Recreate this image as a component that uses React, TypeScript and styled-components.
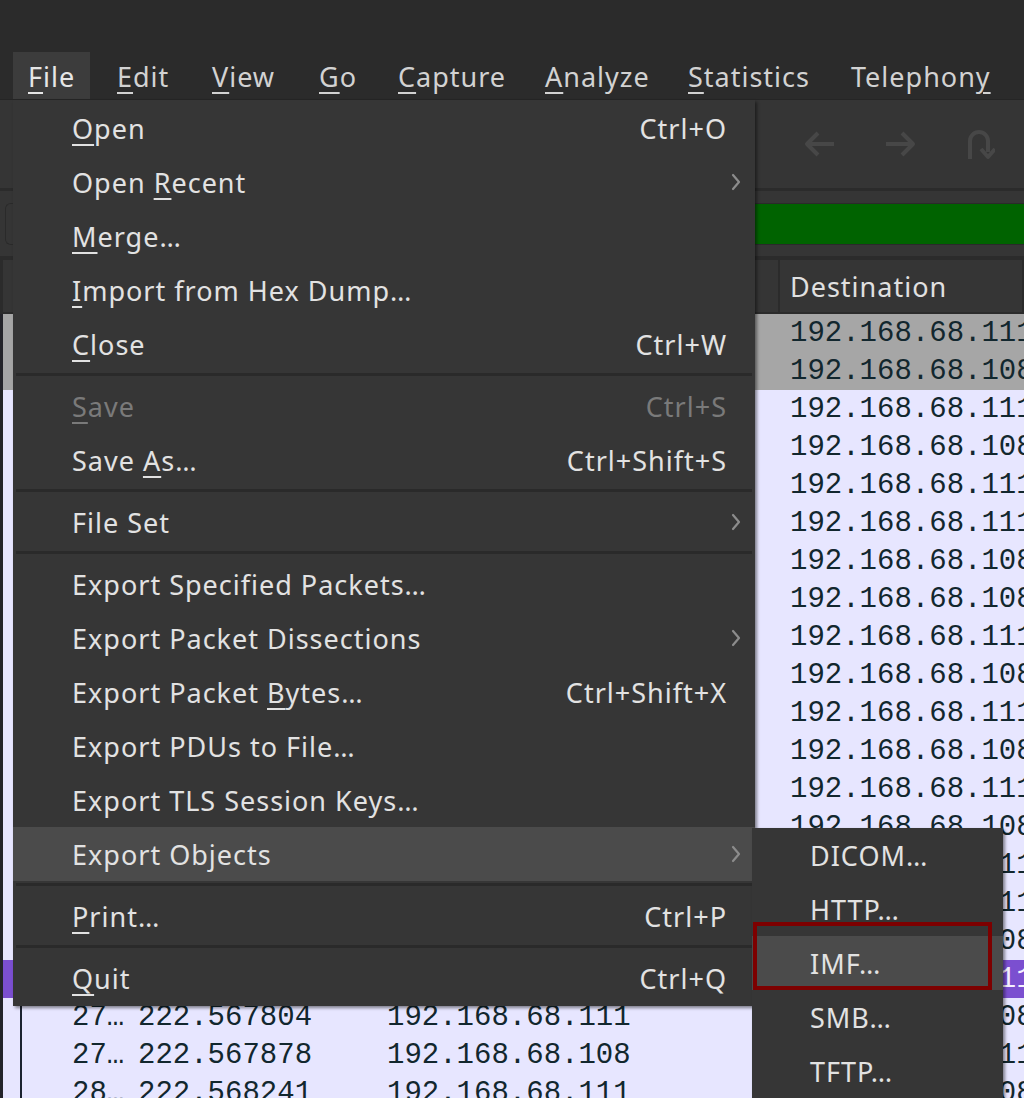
import React from "react";
import styled, { createGlobalStyle, css } from "styled-components";

const Global = createGlobalStyle`
  html, body { margin: 0; padding: 0; background: #2b2b2b; overflow: hidden; }
  * { box-sizing: border-box; }
`;

const UI = `"Noto Sans", "DejaVu Sans", sans-serif`;
const MONO = `"Liberation Mono", "DejaVu Sans Mono", monospace`;

const uiText = css`
  font-family: ${UI};
  font-size: 27px;
  letter-spacing: 1px;
`;

const Window = styled.div`
  position: relative;
  width: 1024px;
  height: 1098px;
  overflow: hidden;
  background: #2b2b2b;
  display: flex;
  flex-direction: column;
  font-family: ${UI};
`;

const TitleSpace = styled.div`
  height: 52px;
  flex: none;
`;

const MenuBar = styled.div`
  height: 48px;
  flex: none;
  display: flex;
  gap: 12px;
  padding-left: 13px;
  border-bottom: 1px solid #252525;
`;

const MenuTitle = styled.div<{ $w: number; $open?: boolean }>`
  width: ${(p) => p.$w}px;
  flex: none;
  display: flex;
  align-items: center;
  padding: 2px 0 0 15px;
  ${uiText}
  color: ${(p) => (p.$open ? "#e6e6e6" : "#d2d2d2")};
  background: ${(p) => (p.$open ? "#3c3c3c" : "transparent")};
  white-space: nowrap;
`;

const Mn = styled.span`
  text-decoration: underline;
  text-decoration-thickness: 2px;
  text-underline-offset: 5px;
`;

const Toolbar = styled.div`
  height: 91px;
  flex: none;
  background: #353535;
  display: flex;
  align-items: center;
  border-bottom: 3px solid #2b2b2b;
`;

const ToolButton = styled.div`
  width: 80px;
  height: 60px;
  flex: none;
  display: flex;
  align-items: center;
  justify-content: center;
  color: #474747;
`;

const ToolSep = styled.div`
  width: 20px;
  height: 50px;
  flex: none;
  display: flex;
  justify-content: center;
  &::after {
    content: "";
    width: 2px;
    background: #2e2e2e;
  }
`;

const FilterBar = styled.div`
  height: 69px;
  flex: none;
  background: #353535;
  padding: 12px 0 11px 5px;
  display: flex;
  border-bottom: 4px solid #2b2b2b;
`;

const FilterInput = styled.div`
  flex: 1;
  display: flex;
  border: 1px solid #2a2a2a;
  border-right: none;
  border-radius: 6px 0 0 6px;
  overflow: hidden;
`;

const BookmarkBtn = styled.div`
  width: 44px;
  background: #353535;
  border-right: 1px solid #2a2a2a;
`;

const FilterField = styled.div`
  flex: 1;
  background: #006300;
`;

const ListHeader = styled.div`
  height: 54px;
  flex: none;
  background: #353535;
  display: flex;
  border-left: 3px solid #2b2b2b;
  border-bottom: 2px solid #2b2b2b;
`;

const HeadCell = styled.div<{ $w?: number }>`
  ${(p) => (p.$w ? `width: ${p.$w}px; flex: none;` : `flex: 1;`)}
  display: flex;
  align-items: center;
  padding-left: 10px;
  ${uiText}
  color: #e0e0e0;
  border-right: 2px solid #2b2b2b;
  white-space: nowrap;
`;

const List = styled.div`
  flex: 1;
  display: flex;
  flex-direction: column;
  border-left: 3px solid #24242a;
  background: #e7e6ff;
`;

type Kind = "gray" | "tcp" | "sel";

const rowBg: Record<Kind, string> = {
  gray: "#a6a6a6",
  tcp: "#e7e6ff",
  sel: "#7b4fd0",
};

const PacketRow = styled.div<{ $kind: Kind }>`
  height: 38px;
  flex: none;
  display: flex;
  align-items: center;
  background: ${(p) => rowBg[p.$kind]};
  color: ${(p) => (p.$kind === "sel" ? "#f4f0ff" : "#12272e")};
  font-family: ${MONO};
  font-size: 29px;
  white-space: nowrap;
`;

const Cell = styled.div<{ $w?: number; $rel?: boolean }>`
  ${(p) => (p.$w ? `width: ${p.$w}px; flex: none;` : `flex: 1;`)}
  height: 100%;
  display: flex;
  align-items: center;
  padding-left: 10px;
  overflow: hidden;
  ${(p) =>
    p.$rel &&
    css`
      background-image: linear-gradient(#1c2330, #1c2330);
      background-size: 2px 100%;
      background-position: 17px 0;
      background-repeat: no-repeat;
    `}
`;

const NoCell = styled(Cell)`
  padding-left: 69px;
`;

/* ---------- Menus ---------- */

const MenuPanel = styled.div`
  position: absolute;
  left: 13px;
  top: 100px;
  width: 742px;
  padding: 1px 0 0;
  height: 906px;
  background: #363636;
  box-shadow: 2px 2px 3px rgba(0, 0, 0, 0.45);
  display: flex;
  flex-direction: column;
  z-index: 5;
`;

const SubPanel = styled.div`
  position: absolute;
  left: 752px;
  top: 828px;
  width: 251px;
  height: 280px;
  background: #363636;
  box-shadow: 2px 2px 3px rgba(0, 0, 0, 0.45);
  display: flex;
  flex-direction: column;
  z-index: 6;
`;

const Item = styled.div<{ $active?: boolean; $disabled?: boolean; $pl: number }>`
  height: 54px;
  flex: none;
  display: flex;
  align-items: center;
  padding-left: ${(p) => p.$pl}px;
  ${uiText}
  color: ${(p) => (p.$disabled ? "#7a7a7a" : "#e2e2e2")};
  background: ${(p) => (p.$active ? "#4b4b4b" : "transparent")};
  white-space: nowrap;
`;

const Label = styled.span`
  flex: 1;
`;

const Shortcut = styled.span`
  flex: none;
`;

const ArrowSlot = styled.span`
  width: 28px;
  flex: none;
  display: flex;
  align-items: center;
  padding-left: 4px;
  color: #8c8c8c;
`;

const Sep = styled.div`
  height: 8px;
  flex: none;
  padding: 2px 3px 3px;
  &::after {
    content: "";
    display: block;
    height: 3px;
    background: #2a2a2a;
  }
`;

const Annotation = styled.div`
  position: absolute;
  left: 753px;
  top: 922px;
  width: 239px;
  height: 68px;
  border: 4px solid #7d0000;
  z-index: 7;
`;

/* ---------- Data ---------- */

type MItem =
  | "sep"
  | {
      label: string;
      m?: number;
      sc?: string;
      arrow?: boolean;
      disabled?: boolean;
      active?: boolean;
    };

const fileMenu: MItem[] = [
  { label: "Open", m: 0, sc: "Ctrl+O" },
  { label: "Open Recent", m: 5, arrow: true },
  { label: "Merge…", m: 0 },
  { label: "Import from Hex Dump…", m: 0 },
  { label: "Close", m: 0, sc: "Ctrl+W" },
  "sep",
  { label: "Save", m: 0, sc: "Ctrl+S", disabled: true },
  { label: "Save As…", m: 5, sc: "Ctrl+Shift+S" },
  "sep",
  { label: "File Set", arrow: true },
  "sep",
  { label: "Export Specified Packets…" },
  { label: "Export Packet Dissections", arrow: true },
  { label: "Export Packet Bytes…", m: 14, sc: "Ctrl+Shift+X" },
  { label: "Export PDUs to File…" },
  { label: "Export TLS Session Keys…" },
  { label: "Export Objects", arrow: true, active: true },
  "sep",
  { label: "Print…", m: 0, sc: "Ctrl+P" },
  "sep",
  { label: "Quit", m: 0, sc: "Ctrl+Q" },
];

const subMenu = [
  { label: "DICOM…" },
  { label: "HTTP…" },
  { label: "IMF…", active: true },
  { label: "SMB…" },
  { label: "TFTP…" },
];

const menuTitles: { label: string; m: number; w: number }[] = [
  { label: "File", m: 0, w: 77 },
  { label: "Edit", m: 0, w: 83 },
  { label: "View", m: 0, w: 95 },
  { label: "Go", m: 0, w: 67 },
  { label: "Capture", m: 0, w: 135 },
  { label: "Analyze", m: 0, w: 131 },
  { label: "Statistics", m: 0, w: 151 },
  { label: "Telephony", m: 8, w: 170 },
];

const dests = [
  111, 108, 111, 108, 111, 111, 108, 108, 111, 108, 111, 108, 111, 108, 111,
  111, 108, 111, 108, 111, 108,
];

const times = ["222.567804", "222.567878", "222.568241"];

const rows = dests.map((d, i) => {
  const kind: Kind = i < 2 ? "gray" : i === 17 ? "sel" : "tcp";
  return {
    kind,
    no: i >= 20 ? "28…" : "27…",
    time: i >= 18 ? times[i - 18] : (222.5521 + i * 0.00087).toFixed(6),
    src: d === 111 ? "192.168.68.108" : "192.168.68.111",
    dst: "192.168.68." + d,
    rel: i >= 17,
  };
});

const Mnemonic: React.FC<{ text: string; m?: number }> = ({ text, m }) => {
  if (m === undefined) return <>{text}</>;
  return (
    <>
      {text.slice(0, m)}
      <Mn>{text[m]}</Mn>
      {text.slice(m + 1)}
    </>
  );
};

const Chevron = () => (
  <svg width="10" height="18" viewBox="0 0 10 18" fill="none">
    <path d="M2 2 L8 9 L2 16" stroke="currentColor" strokeWidth="2.2" strokeLinecap="round" strokeLinejoin="round" />
  </svg>
);

const ArrowLeft = () => (
  <svg width="32" height="28" viewBox="0 0 32 28" fill="none">
    <path d="M30 14 H4 M14 3 L3 14 L14 25" stroke="currentColor" strokeWidth="4" strokeLinejoin="round" />
  </svg>
);

const ArrowRight = () => (
  <svg width="32" height="28" viewBox="0 0 32 28" fill="none">
    <path d="M2 14 H28 M18 3 L29 14 L18 25" stroke="currentColor" strokeWidth="4" strokeLinejoin="round" />
  </svg>
);

const GoTo = () => (
  <svg width="30" height="32" viewBox="0 0 30 32" fill="none">
    <path d="M5 31 V13 A9 9 0 0 1 23 13 V24" stroke="currentColor" strokeWidth="4" />
    <path d="M16 21 L23 29 L30 21" stroke="currentColor" strokeWidth="4" strokeLinejoin="round" />
  </svg>
);

export default function App() {
  return (
    <>
      <Global />
      <Window>
        <TitleSpace />
        <MenuBar>
          {menuTitles.map((t, i) => (
            <MenuTitle key={t.label} $w={t.w} $open={i === 0}>
              <Mnemonic text={t.label} m={t.m} />
            </MenuTitle>
          ))}
        </MenuBar>
        <Toolbar>
          <ToolButton />
          <ToolButton />
          <ToolButton />
          <ToolButton />
          <ToolSep />
          <ToolButton />
          <ToolButton />
          <ToolButton />
          <ToolSep />
          <ToolButton />
          <ToolSep />
          <ToolButton />
          <ToolButton>
            <ArrowLeft />
          </ToolButton>
          <ToolButton>
            <ArrowRight />
          </ToolButton>
          <ToolButton>
            <GoTo />
          </ToolButton>
        </Toolbar>
        <FilterBar>
          <FilterInput>
            <BookmarkBtn />
            <FilterField />
          </FilterInput>
        </FilterBar>
        <ListHeader>
          <HeadCell $w={125}>No.</HeadCell>
          <HeadCell $w={249}>Time</HeadCell>
          <HeadCell $w={403}>Source</HeadCell>
          <HeadCell>Destination</HeadCell>
        </ListHeader>
        <List>
          {rows.map((r, i) => (
            <PacketRow key={i} $kind={r.kind}>
              <NoCell $w={125} $rel={r.rel}>{r.no}</NoCell>
              <Cell $w={249}>{r.time}</Cell>
              <Cell $w={403}>{r.src}</Cell>
              <Cell>{r.dst}</Cell>
            </PacketRow>
          ))}
        </List>

        <MenuPanel>
          {fileMenu.map((it, i) =>
            it === "sep" ? (
              <Sep key={i} />
            ) : (
              <Item key={i} $pl={59} $active={it.active} $disabled={it.disabled}>
                <Label>
                  <Mnemonic text={it.label} m={it.m} />
                </Label>
                {it.sc && <Shortcut>{it.sc}</Shortcut>}
                <ArrowSlot>{it.arrow && <Chevron />}</ArrowSlot>
              </Item>
            )
          )}
        </MenuPanel>
        <SubPanel>
          {subMenu.map((it) => (
            <Item key={it.label} $pl={58} $active={it.active}>
              <Label>{it.label}</Label>
            </Item>
          ))}
        </SubPanel>
        <Annotation />
      </Window>
    </>
  );
}
